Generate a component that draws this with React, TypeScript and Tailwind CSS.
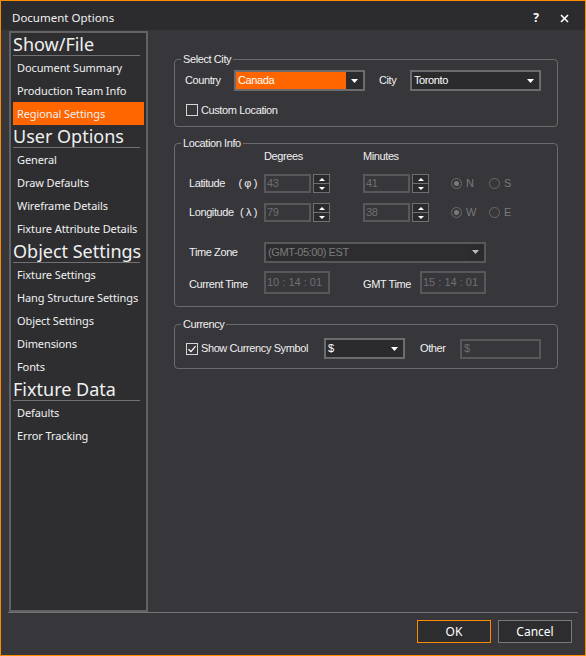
import React from 'react';

const navSections = [
  { title: 'Show/File', items: ['Document Summary', 'Production Team Info', 'Regional Settings'] },
  { title: 'User Options', items: ['General', 'Draw Defaults', 'Wireframe Details', 'Fixture Attribute Details'] },
  { title: 'Object Settings', items: ['Fixture Settings', 'Hang Structure Settings', 'Object Settings', 'Dimensions', 'Fonts'] },
  { title: 'Fixture Data', items: ['Defaults', 'Error Tracking'] },
];

const selectedItem = 'Regional Settings';

function DownArrow({ color = '#ffffff' }: { color?: string }) {
  return (
    <svg width="7" height="4" viewBox="0 0 7 4">
      <polygon points="0,0 7,0 3.5,4" fill={color} />
    </svg>
  );
}

function Combo({
  value,
  width,
  variant = 'normal',
}: {
  value: string;
  width: string;
  variant?: 'normal' | 'accent' | 'disabled';
}) {
  const border = variant === 'disabled' ? 'border-[#58585a]' : 'border-[#6c6c6e]';
  const field =
    variant === 'accent'
      ? 'bg-[#ff6600] text-white'
      : variant === 'disabled'
      ? 'bg-[#2d2d30] text-[#7c7c7c]'
      : 'bg-[#2b2b2e] text-white';
  return (
    <div className={`${width} h-[21px] border-2 ${border} flex bg-[#2b2b2e]`}>
      <div className={`flex-1 flex items-center pl-[2px] ${field}`}>{value}</div>
      <div className="w-[17px] flex items-center justify-center">
        <DownArrow color={variant === 'disabled' ? '#bdbdbd' : '#ffffff'} />
      </div>
    </div>
  );
}

function Checkbox({ checked, label }: { checked?: boolean; label: string }) {
  return (
    <div className="flex items-center gap-[3px]">
      <div className="w-[12px] h-[12px] border border-[#d6d6d6] flex items-center justify-center">
        {checked && (
          <svg width="10" height="10" viewBox="0 0 10 10">
            <path d="M1.5 5.2 L4 7.6 L8.6 2.2" stroke="#ffffff" strokeWidth="1.3" fill="none" />
          </svg>
        )}
      </div>
      <span>{label}</span>
    </div>
  );
}

function Spinner() {
  return (
    <div className="w-[17px] h-[19px] flex flex-col">
      <div className="flex-1 border border-[#707072] bg-[#2b2b2e] flex items-center justify-center">
        <svg width="6" height="3" viewBox="0 0 6 3">
          <polygon points="0,3 6,3 3,0" fill="#ffffff" />
        </svg>
      </div>
      <div className="flex-1 border border-t-0 border-[#707072] bg-[#2b2b2e] flex items-center justify-center">
        <svg width="6" height="3" viewBox="0 0 6 3">
          <polygon points="0,0 6,0 3,3" fill="#ffffff" />
        </svg>
      </div>
    </div>
  );
}

function NumberBox({ value }: { value: string }) {
  return (
    <div className="flex items-center gap-[2px]">
      <div className="w-[47px] h-[19px] border-2 border-[#58585a] flex items-center pl-[1px] text-[#6f6f6f]">
        {value}
      </div>
      <Spinner />
    </div>
  );
}

function Radio({ label, checked }: { label: string; checked?: boolean }) {
  return (
    <div className="w-[38px] flex items-center gap-[4px] text-[#7a7a7a]">
      <div className="w-[11px] h-[11px] rounded-full border border-[#6a6a6a] flex items-center justify-center">
        {checked && <div className="w-[5px] h-[5px] rounded-full bg-[#7a7a7a]" />}
      </div>
      <span>{label}</span>
    </div>
  );
}

function TimeBox({ value }: { value: string }) {
  return (
    <div className="w-[66px] h-[23px] border-2 border-[#58585a] flex items-center pl-[1px] text-[#6f6f6f] tracking-[0px]">
      {value}
    </div>
  );
}

function Group({
  title,
  className,
  children,
}: {
  title: string;
  className: string;
  children: React.ReactNode;
}) {
  return (
    <fieldset className={`w-[384px] border border-[#6a6a6c] rounded-[4px] ${className}`}>
      <legend className="ml-[6px] px-[2px] leading-[14px]">{title}</legend>
      {children}
    </fieldset>
  );
}

function NavPanel() {
  return (
    <aside className="ml-[1px] mt-[1px] w-[139px] h-[581px] border-2 border-[#626264] bg-[#2e2e30] font-['Noto_Sans',sans-serif] tracking-[0px] text-[#f0f0f0]">
      <div className="px-[2px]">
        {navSections.map((section) => (
          <div key={section.title}>
            <div className="h-[23px] mr-[4px] border-b border-[#727272] text-[18px] leading-[23px] whitespace-nowrap">
              {section.title}
            </div>
            {section.items.map((item) => (
              <div
                key={item}
                className={`h-[23px] pl-[4px] pt-[1px] flex items-center text-[11px] tracking-[-0.1px] whitespace-nowrap ${
                  item === selectedItem ? 'bg-[#ff6600]' : ''
                }`}
              >
                {item}
              </div>
            ))}
          </div>
        ))}
      </div>
    </aside>
  );
}

export default function App() {
  return (
    <div className="w-[586px] h-[656px] border border-[#ff8c00] bg-[#37363b] flex flex-col overflow-hidden font-['Liberation_Sans',Arial,sans-serif] text-[11px] tracking-[-0.4px] text-[#f0f0f0]">
      {/* Title bar */}
      <div className="h-[29px] shrink-0 bg-[#2c2c2f] flex items-center pt-[5px] pl-[11px] pr-[16px] font-['Noto_Sans',sans-serif] tracking-[0px]">
        <span className="flex-1 text-[11.5px] text-[#f2f2f2]">Document Options</span>
        <span className="text-[12px] font-bold text-white mr-[21px]">?</span>
        <svg width="9" height="9" viewBox="0 0 9 9">
          <path d="M1 1 L8 8 M8 1 L1 8" stroke="#ffffff" strokeWidth="1.6" />
        </svg>
      </div>

      {/* Body */}
      <div className="mx-[7px] h-[583px] shrink-0 border-b border-[#747476] flex">
        <NavPanel />

        <main className="pl-[26px] pt-[22px] flex flex-col">
          <Group title="Select City" className="h-[75px]">
            <div className="px-[10px] pt-[4px]">
              <div className="h-[21px] flex items-center">
                <span className="w-[49px]">Country</span>
                <Combo value="Canada" width="w-[131px]" variant="accent" />
                <span className="ml-[14px] w-[31px]">City</span>
                <Combo value="Toronto" width="w-[131px]" />
              </div>
              <div className="mt-[11px] ml-[1px]">
                <Checkbox label="Custom Location" />
              </div>
            </div>
          </Group>

          <Group title="Location Info" className="h-[171px] mt-[9px]">
            <div className="px-[14px]">
              <div className="h-[13px] leading-[13px] flex">
                <span className="ml-[75px] w-[99px]">Degrees</span>
                <span>Minutes</span>
              </div>
              <div className="mt-[11px] h-[19px] flex items-center">
                <div className="w-[68px] mr-[7px] flex justify-between">
                  <span>Latitude</span>
                  <span>( φ )</span>
                </div>
                <div className="w-[99px]">
                  <NumberBox value="43" />
                </div>
                <div className="w-[88px]">
                  <NumberBox value="41" />
                </div>
                <Radio label="N" checked />
                <Radio label="S" />
              </div>
              <div className="mt-[10px] h-[19px] flex items-center">
                <div className="w-[68px] mr-[7px] flex justify-between">
                  <span>Longitude</span>
                  <span>( λ )</span>
                </div>
                <div className="w-[99px]">
                  <NumberBox value="79" />
                </div>
                <div className="w-[88px]">
                  <NumberBox value="38" />
                </div>
                <Radio label="W" checked />
                <Radio label="E" />
              </div>
              <div className="mt-[20px] h-[20px] flex items-center">
                <span className="w-[75px]">Time Zone</span>
                <Combo value="(GMT-05:00) EST" width="w-[222px]" variant="disabled" />
              </div>
              <div className="mt-[9px] h-[23px] flex items-center">
                <span className="w-[75px] pt-[3px]">Current Time</span>
                <TimeBox value="10 : 14 : 01" />
                <span className="ml-[33px] w-[57px] pt-[3px]">GMT Time</span>
                <TimeBox value="15 : 14 : 01" />
              </div>
            </div>
          </Group>

          <Group title="Currency" className="h-[52px] mt-[10px]">
            <div className="pl-[11px] pt-[7px]">
              <div className="h-[21px] flex items-center">
                <div className="w-[138px]">
                  <Checkbox checked label="Show Currency Symbol" />
                </div>
                <Combo value="$" width="w-[81px]" />
                <span className="ml-[15px] w-[40px]">Other</span>
                <div className="w-[81px] h-[20px] border-2 border-[#58585a] flex items-center pl-[2px] text-[#6f6f6f]">
                  $
                </div>
              </div>
            </div>
          </Group>
        </main>
      </div>

      {/* Footer */}
      <div className="flex-1 flex justify-end items-start pt-[7px] pr-[13px] gap-[7px] font-['Noto_Sans',sans-serif] tracking-[0px] text-[12px]">
        <button className="w-[74px] h-[23px] border border-[#ff8c00] bg-[#2d2d30] text-white">OK</button>
        <button className="w-[74px] h-[23px] border border-[#7a7a7a] bg-[#2d2d30] text-white">Cancel</button>
      </div>
    </div>
  );
}
